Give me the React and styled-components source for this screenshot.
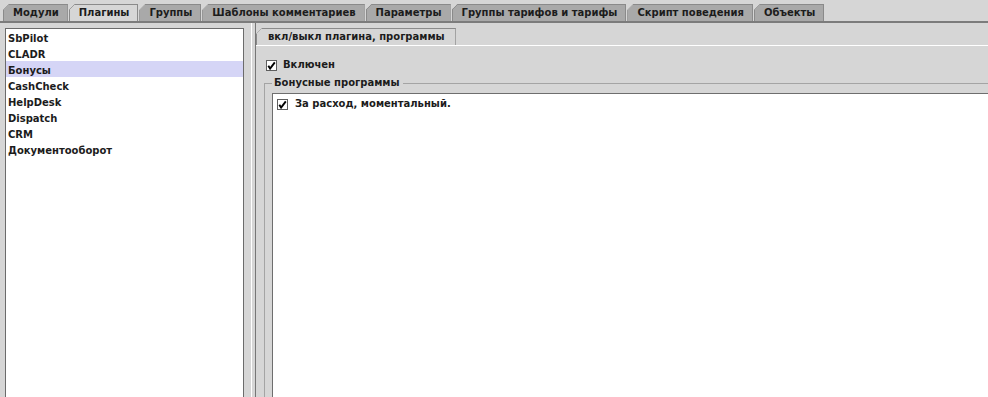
import styled, { createGlobalStyle } from "styled-components";

const GlobalStyle = createGlobalStyle`
    html, body {
        margin: 0;
        padding: 0;
        background-color: #d6d6d6;
    }
    body {
        font-family: "DejaVu Sans", "Liberation Sans", sans-serif;
        font-size: 10px;
        font-weight: bold;
        color: #1c1c1c;
    }
`

const Window = styled.div`
    height: 100vh;
    display: flex;
    flex-direction: column;
    overflow: hidden;
`
const TabStrip = styled.div`
    height: 21px;
    display: flex;
    align-items: flex-end;
    padding-left: 3px;
    border-bottom: 2px solid #7c7c7c;
`
const Tab = styled.div`
    box-sizing: border-box;
    height: 17px;
    line-height: 16px;
    padding: ${props => props.$pad || "0 8px 0 9px"};
    border: 1px solid #8a8a8a;
    border-bottom: none;
    white-space: nowrap;
    background-color: ${props => props.$active ? "#d6d6d6" : "#a9a9a9"};
    background-image: linear-gradient(135deg, transparent 3.6px, #8a8a8a 3.6px, #8a8a8a 4.8px, transparent 4.8px);
    background-origin: border-box;
    clip-path: polygon(6px 0, 100% 0, 100% 100%, 0 100%, 0 6px);
    margin-right: 1px;
`
const Body = styled.div`
    flex: 1;
    display: flex;
    min-height: 0;
`
const LeftPane = styled.div`
    box-sizing: border-box;
    width: 250px;
    padding: 5px 6px 0 5px;
    display: flex;
`
const PluginList = styled.div`
    flex: 1;
    background-color: #fff;
    border: 1px solid #6b6b6b;
    border-bottom: none;
`
const ListItem = styled.div`
    height: 14px;
    padding-top: 2px;
    line-height: 15px;
    padding-left: 2px;
    background-color: ${props => props.$selected ? "#d5d5f6" : "transparent"};
`
const Splitter = styled.div`
    width: 3px;
    margin-left: 1px;
    border-left: 1px solid #fff;
`
const RightPane = styled.div`
    flex: 1;
    min-width: 0;
    display: flex;
    flex-direction: column;
    border-left: 1px solid #767676;
`
const SubTabRow = styled.div`
    display: flex;
    padding-top: 5px;
`
const SubPanel = styled.div`
    flex: 1;
    display: flex;
    flex-direction: column;
    border-top: 1px solid #fff;
    padding: 13px 0 0 10px;
    min-height: 0;
`
const CheckRow = styled.div`
    display: flex;
    align-items: center;
    gap: ${props => props.$gap || 6}px;
    height: 12px;
    line-height: 12px;
`
const Group = styled.fieldset`
    flex: 1;
    display: flex;
    flex-direction: column;
    min-width: 0;
    margin: 6px 0 0 -2px;
    padding: 4px 0 0 7px;
    border: none;
    border-top: 1px solid #a4a4a4;
    border-left: 1px solid #a4a4a4;
`
const Legend = styled.legend`
    padding: 0 3px 0 2px;
    line-height: 12px;
`
const ProgramBox = styled.div`
    flex: 1;
    background-color: #fff;
    border-top: 1px solid #6e6e6e;
    border-left: 1px solid #6e6e6e;
    padding: 4px 0 0 4px;
`

const tabs = ["Модули", "Плагины", "Группы", "Шаблоны комментариев", "Параметры", "Группы тарифов и тарифы", "Скрипт поведения", "Объекты"];
const plugins = ["SbPilot", "CLADR", "Бонусы", "CashCheck", "HelpDesk", "Dispatch", "CRM", "Документооборот"];

const CheckBox = () => (
    <svg width="11" height="11" viewBox="0 0 11 11">
        <rect x="0.5" y="0.5" width="10" height="10" fill="#fff" stroke="#5e5e5e" />
        <path d="M2.3 5.8 L4.1 8.6 L8.8 2.4" fill="none" stroke="#000" strokeWidth="1.9" />
    </svg>
)

const App = () => {
    return (
        <Window>
            <GlobalStyle />
            <TabStrip>
                {tabs.map(t => <Tab key={t} $active={t === "Плагины"}>{t}</Tab>)}
            </TabStrip>
            <Body>
                <LeftPane>
                    <PluginList>
                        {plugins.map(p => <ListItem key={p} $selected={p === "Бонусы"}>{p}</ListItem>)}
                    </PluginList>
                </LeftPane>
                <Splitter />
                <RightPane>
                    <SubTabRow>
                        <Tab $active $pad="0 10px 0 11px">вкл/выкл плагина, программы</Tab>
                    </SubTabRow>
                    <SubPanel>
                        <CheckRow>
                            <CheckBox />
                            Включен
                        </CheckRow>
                        <Group>
                            <Legend>Бонусные программы</Legend>
                            <ProgramBox>
                                <CheckRow $gap={7}>
                                    <CheckBox />
                                    За расход, моментальный.
                                </CheckRow>
                            </ProgramBox>
                        </Group>
                    </SubPanel>
                </RightPane>
            </Body>
        </Window>
    )
}

export default App;
